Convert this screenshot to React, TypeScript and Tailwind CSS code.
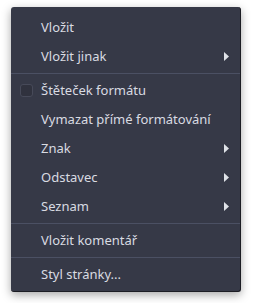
import React from "react";

type Item =
  | { type: "item"; label: string; submenu?: boolean; check?: boolean }
  | { type: "sep" };

const items: Item[] = [
  { type: "item", label: "Vložit" },
  { type: "item", label: "Vložit jinak", submenu: true },
  { type: "sep" },
  { type: "item", label: "Štěteček formátu", check: true },
  { type: "item", label: "Vymazat přímé formátování" },
  { type: "item", label: "Znak", submenu: true },
  { type: "item", label: "Odstavec", submenu: true },
  { type: "item", label: "Seznam", submenu: true },
  { type: "sep" },
  { type: "item", label: "Vložit komentář" },
  { type: "sep" },
  { type: "item", label: "Styl stránky..." },
];

// small solid arrow for submenus
function SubArrow() {
  return (
    <svg width="5" height="9" viewBox="0 0 5 9" className="shrink-0">
      <path d="M0 0 L5 4.5 L0 9 Z" fill="#dfe2e8" />
    </svg>
  );
}

export default function App() {
  return (
    <div className="w-[254px] h-[303px] bg-white pt-[7px] pl-[11px]">
      <div
        className="w-[230px] h-[285px] rounded-[3px] bg-[#363947] border-r border-b border-[#1c1d24] pt-[6px] pb-[2px] shadow-[0_3px_10px_rgba(0,0,0,0.35)]"
        style={{ fontFamily: '"Noto Sans", "Open Sans", sans-serif' }}
      >
        {items.map((it, i) =>
          it.type === "sep" ? (
            <div key={i} className="py-[2px]">
              <div className="h-px bg-[#4b5063]" />
            </div>
          ) : (
            <div
              key={i}
              className="h-[29px] flex items-center pl-[9px] pr-[11px] text-[13px] text-[#d9dbe2]"
            >
              <div className="w-[21px] flex items-center">
                {it.check && (
                  <div className="w-[13px] h-[13px] rounded-[3px] bg-[#30323e] border border-[#474a59]" />
                )}
              </div>
              <span className="flex-1 whitespace-nowrap">{it.label}</span>
              {it.submenu && <SubArrow />}
            </div>
          )
        )}
      </div>
    </div>
  );
}
